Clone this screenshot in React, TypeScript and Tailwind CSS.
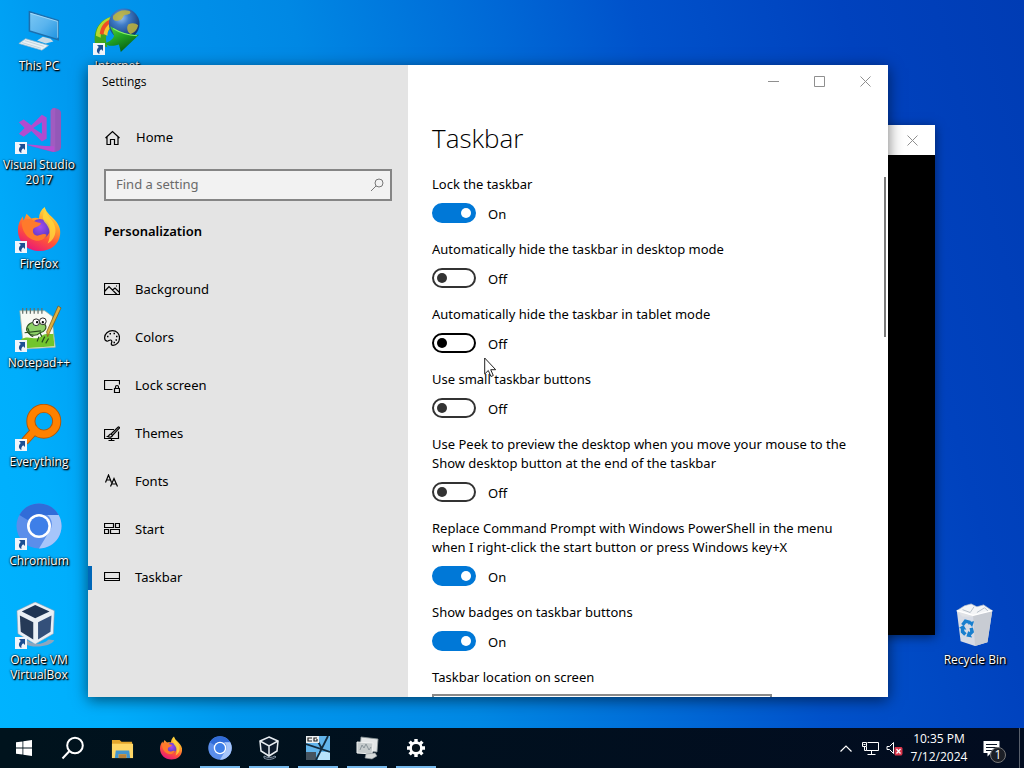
import { useId, useState, type ReactNode } from "react";

type IconProps = { className?: string };

function ThisPcIcon({ className }: IconProps) {
  return (
    <svg viewBox="0 0 48 48" className={className} aria-hidden="true">
      <defs>
        <linearGradient id="pc-screen" x1="0" y1="0" x2="1" y2="1">
          <stop offset="0" stopColor="#7cc8f4" />
          <stop offset="0.5" stopColor="#5ab4ee" />
          <stop offset="1" stopColor="#1d92e0" />
        </linearGradient>
      </defs>
      <path d="M14 4 44 13v20L14 24z" fill="url(#pc-screen)" stroke="#1c6fae" strokeWidth="1.6" />
      <path d="M15 5.5 43.5 14v17" fill="none" stroke="#b7e4fb" strokeWidth="0.8" />
      <path d="m28 30 8 2 3 3-8 2-9-3z" fill="#c9dbe6" />
      <path d="m10 32 24 7-7 5L3 37z" fill="#e8f1f5" stroke="#9fb8c8" strokeWidth="0.7" />
      <path d="m9 34 20 6M6 36l20 6" stroke="#b9ccd8" strokeWidth="0.8" />
    </svg>
  );
}

function GlobeArrowIcon({ className }: IconProps) {
  return (
    <svg viewBox="0 0 48 48" className={className} aria-hidden="true">
      <defs>
        <radialGradient id="globe" cx="0.4" cy="0.3" r="0.7">
          <stop offset="0" stopColor="#9cc4f0" />
          <stop offset="0.35" stopColor="#3f7cc8" />
          <stop offset="1" stopColor="#12356e" />
        </radialGradient>
        <linearGradient id="globe-arrow" x1="0" y1="0" x2="0.6" y2="1">
          <stop offset="0" stopColor="#58dc3c" />
          <stop offset="0.5" stopColor="#21a325" />
          <stop offset="1" stopColor="#075c12" />
        </linearGradient>
      </defs>
      <path d="M18 9C5 13-1 23 1 37l13 4c-3-9-2-18 8-23z" fill="#3fa51f" />
      <path d="M18 9C8 12 2 20 2 29l5 2c0-9 4-14 12-17z" fill="#b6d82e" />
      <path d="M19 11C11 14 7 19 6 27l4 1c1-7 4-10 10-13z" fill="#ef4b26" />
      <path d="M20 14c-6 3-9 7-10 13l4 2c0-6 3-9 8-12z" fill="#f7c531" />
      <circle cx="31.500" cy="16.500" r="16" fill="url(#globe)" />
      <path d="M20 8c4-5 11-7 17-5 3 2-1 4-4 4s-2 5-7 6-7-1-6-5zM36 17c4-2 8-1 10 1-1 5-4 8-8 9-4-2-4-8-2-10z" fill="#c3b53a" opacity="0.85" />
      <path d="M17 19c9 6 17 9 30 9L28 46l-2-8c-6 2-11 2-15-1 5-2 9-4 10-8z" fill="url(#globe-arrow)" />
      <path d="M20 21.500c8 5 15 7 25 7.500" fill="none" stroke="#86f066" strokeWidth="1.200" />
    </svg>
  );
}

function VisualStudioIcon({ className }: IconProps) {
  return (
    <svg viewBox="0 0 48 48" className={className} aria-hidden="true">
      <path d="M38 1c5 0 9 2 9 5v36c0 3-4 5-9 5L12 40l24 1z" fill="#9358b8" />
      <path d="M36 4c1-2 3-3 5-3v46l-5-6z" fill="#a05cc0" />
      <path d="M3 16 8 13l8 6L27 8l5 3v22l-5 3-11-11-8 6-5-3 6-6zm15 6 9 6V16z" fill="#b14ccf" fillRule="evenodd" />
      <path d="M10 39c9 0 18 2 30 2v6z" fill="#b64dd2" />
    </svg>
  );
}

function FirefoxIcon({ className }: IconProps) {
  const id = useId();
  return (
    <svg viewBox="0 0 48 48" className={className} aria-hidden="true">
      <defs>
        <linearGradient id={`${id}b`} x1="0.8" y1="0" x2="0.3" y2="1">
          <stop offset="0" stopColor="#ffee46" />
          <stop offset="0.35" stopColor="#ffa02c" />
          <stop offset="0.65" stopColor="#ff5438" />
          <stop offset="1" stopColor="#e8147c" />
        </linearGradient>
        <radialGradient id={`${id}p`} cx="0.5" cy="0.4" r="0.6">
          <stop offset="0" stopColor="#a34df0" />
          <stop offset="1" stopColor="#5a38c0" />
        </radialGradient>
      </defs>
      <path d="M30 1c1 5 5 8 9 12 5 5 8 10 7 17C45 40 36 47 25 47 12 47 2 38 2 25c0-6 2-10 5-14l1 4 3-7 5 5c3-1 6-1 8 0 0-5 2-9 6-12z" fill={`url(#${id}b)`} />
      <circle cx="25" cy="24" r="10.5" fill={`url(#${id}p)`} />
      <path d="M6 17c5-4 9-4 12-2 2 2 6 2 8 3-1 4-6 3-8 6-1 3 0 6 4 7 4 0 6-3 10-1-2 5-7 7-12 6C11 34 6 26 6 17z" fill="#ff7a2b" />
      <path d="M31 3c0 8 9 11 10 20 1 7-2 13-8 16 4-8 3-16-3-22-3-4-2-10 1-14z" fill="#ffd83c" opacity="0.8" />
    </svg>
  );
}

function NotepadIcon({ className }: IconProps) {
  return (
    <svg viewBox="0 0 48 48" className={className} aria-hidden="true">
      <path d="M4 6h26l8 6v6l3 26L8 46z" fill="#f8faf4" stroke="#a4b3a0" strokeWidth="0.8" />
      <path d="M5 36c9-6 15 3 22-4 4-3 9-1 12-2l1 13-31 2z" fill="#72c52d" />
      <path d="M7 3v6m4-6v6m4-6v6m4-6v6m4-6v6m4-6v6" stroke="#65716c" strokeWidth="1.3" />
      <path d="M11 26c0-6 6-9 11-8l8 2c3 4 0 8-5 9-4 4-11 3-13-1z" fill="#8ed169" stroke="#2e5422" strokeWidth="1.2" />
      <circle cx="21" cy="18" r="3.5" fill="#fff" stroke="#222" />
      <circle cx="28" cy="17" r="3.5" fill="#fff" stroke="#222" />
      <circle cx="22" cy="18" r="1.2" />
      <circle cx="28" cy="18" r="1.2" />
      <path d="m9 29 17-2M12 24c3 3 0 8 6 9m7-4 2 4M22 38l2-5m3 6 3-6m1 7 3-5" fill="none" stroke="#264c1e" strokeWidth="1.2" />
      <path d="M47 3 35 29l-2 4-1-5L44 1z" fill="#deb03f" stroke="#7e5b1b" strokeWidth="0.8" />
    </svg>
  );
}

function EverythingIcon({ className }: IconProps) {
  return (
    <svg viewBox="0 0 48 48" className={className} aria-hidden="true">
      <circle cx="29" cy="18" r="13.5" fill="none" stroke="#b05708" strokeWidth="9.5" />
      <path d="m19 28-9 10" stroke="#b05708" strokeWidth="9" strokeLinecap="round" />
      <circle cx="29" cy="18" r="13.5" fill="none" stroke="#ff8100" strokeWidth="7.5" />
      <path d="m20 27-10 11" stroke="#ff8100" strokeWidth="7" strokeLinecap="round" />
    </svg>
  );
}

function ChromiumIcon({ className }: IconProps) {
  return (
    <svg viewBox="0 0 48 48" className={className} aria-hidden="true">
      <circle cx="24" cy="24" r="23.5" fill="#5b8eea" />
      <path d="M3.5 12.5A23.5 23.5 0 0 1 44.5 12.5H24a12 12 0 0 0-10.5 6z" fill="#316cd8" />
      <path d="M44.5 12.5A23.5 23.5 0 0 1 24 47.5L34.5 30a12 12 0 0 0-2-17.5z" fill="#a6c5fa" />
      <circle cx="24" cy="24" r="12.5" fill="#fff" />
      <circle cx="24" cy="24" r="9.8" fill="#3e7fe8" />
    </svg>
  );
}

function VirtualBoxIcon({ className }: IconProps) {
  return (
    <svg viewBox="0 0 48 48" className={className} aria-hidden="true">
      <path d="M12 40c5 5 16 5 22-1l6 1c-4 7-24 9-32 3z" fill="#8fa6bd" />
      <path d="M20 0 40 9l-1 24-19 11L2 33 1 9z" fill="#e9eff5" stroke="#8b9db2" strokeWidth="0.6" />
      <path d="m20 3 15 7-15 7-14-7z" fill="#1e3453" />
      <path d="m4 14 14 7v18L5 31z" fill="#263a57" />
      <path d="m37 14-14 7v18l13-8z" fill="#34507a" />
    </svg>
  );
}

function RecycleBinIcon({ className }: IconProps) {
  return (
    <svg viewBox="0 0 48 48" className={className} aria-hidden="true">
      <path d="m5 9 8-5 7-2 6 3 7-2 9 6-5 6H11z" fill="#f4f5f7" stroke="#bac1ca" strokeWidth="0.7" />
      <path d="m11 8 8 3 4-6m3 6 8-5 4 4" fill="none" stroke="#b4bdc7" />
      <path d="m5 9 17 5 20-5-5 33-13 4-15-5z" fill="#e0e2e6" opacity="0.96" />
      <path d="m22 14 20-5-5 33-13 4z" fill="#c8ccd3" />
      <path d="m5 9 17 5 20-5" fill="none" stroke="#fff" strokeWidth="1.3" />
      <g fill="none" stroke="#187fce" strokeWidth="3.6">
        <path d="m11 24 3-4 4 1 1 2" />
        <path d="m11 27 0 4 3 3" />
        <path d="m18 34 3-3-1-4" />
      </g>
      <path d="m17 21 6-1-2 6zM7 27l5-3 3 5zM17 30l-2 6 6 1z" fill="#187fce" />
    </svg>
  );
}

function FolderIcon({ className }: IconProps) {
  return (
    <svg viewBox="0 0 24 24" className={className} aria-hidden="true">
      <path d="M1 3h8l2 2h11v17H1z" fill="#e4a72d" />
      <path d="M1 7h22v15H1z" fill="#ffd766" />
      <path d="M5 14h14l1 8h-4v-4H8v4H4z" fill="#4295cf" />
      <path d="M8 18h8v4H8z" fill="#b8823a" />
    </svg>
  );
}

function TilesIcon({ className }: IconProps) {
  return (
    <svg viewBox="0 0 24 24" className={className} aria-hidden="true">
      <path d="M0 0h24v24H0z" fill="#62b5ec" />
      <path d="M0 16h10v8H0z" fill="#46535f" />
      <path d="M12 16h12v8H12z" fill="#b8e3fc" />
      <path d="M22 0 10 24M0 8l24 8M9 0l7 13" fill="none" stroke="#122b3e" strokeWidth="1.8" />
      <path d="M0 0h13v7H0z" fill="#edf1f2" />
      <path d="M6 2H2v3h4M11 2H8v3h3V3" fill="none" stroke="#222" strokeWidth="1.2" />
    </svg>
  );
}

function MonitorsIcon({ className }: IconProps) {
  return (
    <svg viewBox="0 0 24 24" className={className} aria-hidden="true">
      <path d="m6 1 17 2-1 13-17-2z" fill="#e3e6e7" stroke="#8c9598" strokeWidth="0.8" />
      <path d="m2 6 16 1-1 11-15-1z" fill="#c6cccd" stroke="#eff1f1" strokeWidth="1" />
      <path d="m5 14 2-5 2 3 2-4 3 6 2-3" fill="none" stroke="#89949a" strokeWidth="1" />
      <path d="m11 18 9-1 2 3-5 3-7-1z" fill="#d6dada" stroke="#889195" strokeWidth="0.6" />
    </svg>
  );
}

function GearIcon({ className }: IconProps) {
  return (
    <svg viewBox="0 0 24 24" className={className} aria-hidden="true">
      <path
        d="M12 3v4M12 17v4M3 12h4M17 12h4M5.6 5.6l3 3M15.4 15.4l3 3M18.4 5.6l-3 3M8.6 15.4l-3 3"
        stroke="#fff"
        strokeWidth="3.4"
      />
      <circle cx="12" cy="12" r="5.4" fill="#06121b" stroke="#fff" strokeWidth="2.6" />
    </svg>
  );
}

function ShortcutBadge() {
  return (
    <svg viewBox="0 0 12 12" className="absolute bottom-0 left-0 size-3" aria-hidden="true">
      <path d="M0 0h12v12H0z" fill="#f1f5fb" />
      <path d="M4 2h6v6L8.200 6.200C6.500 7.500 6 9 6.500 11 3.500 9.500 3 6.500 5.800 3.900z" fill="#1d4f93" />
    </svg>
  );
}

type DesktopItem = { label: string; icon: ReactNode; shortcut: boolean };

const desktopItems: DesktopItem[] = [
  { label: "This PC", icon: <ThisPcIcon className="size-full" />, shortcut: false },
  { label: "Visual Studio 2017", icon: <VisualStudioIcon className="size-full" />, shortcut: true },
  { label: "Firefox", icon: <FirefoxIcon className="size-full" />, shortcut: true },
  { label: "Notepad++", icon: <NotepadIcon className="size-full" />, shortcut: true },
  { label: "Everything", icon: <EverythingIcon className="size-full" />, shortcut: true },
  { label: "Chromium", icon: <ChromiumIcon className="size-full" />, shortcut: true },
  { label: "Oracle VM VirtualBox", icon: <VirtualBoxIcon className="size-full" />, shortcut: true },
];

function DesktopShortcut({ label, icon, shortcut }: DesktopItem) {
  return (
    <button type="button" className="flex h-[99px] w-[78px] flex-col items-center gap-[3px] pt-[7px]">
      <span className="relative flex size-12 items-center justify-center">
        <span className="size-[46px]">{icon}</span>
        {shortcut && <ShortcutBadge />}
      </span>
      <span className="text-center text-xs leading-[15px] text-white [text-shadow:1px_1px_2px_#000,0_0_2px_#000,1px_1px_1px_#000]">
        {label}
      </span>
    </button>
  );
}

function NavSvg({ children }: { children: ReactNode }) {
  return (
    <svg
      viewBox="0 0 16 16"
      className="size-4 shrink-0"
      fill="none"
      stroke="#000"
      strokeWidth="1.200"
      aria-hidden="true"
    >
      {children}
    </svg>
  );
}

const navItems: { label: string; icon: ReactNode }[] = [
  {
    label: "Background",
    icon: (
      <NavSvg>
        <path d="M.5 1.500h15v11H.5zM.5 9.500l4.500-5 8 8M8.500 8l2.500-2 4.500 4.500" />
        <path d="M12 4h1" />
      </NavSvg>
    ),
  },
  {
    label: "Colors",
    icon: (
      <NavSvg>
        <path d="M8.500.7c4 0 7 3 7 7 0 4.500-3 7.600-6.500 7.600-1.500 0-2-1-1.500-2.300.6-1.500.4-2.700-.8-3-1.500-.3-2.200 1.500-3.700 1.200C1.500 10.900.6 9.500.6 7.700c0-4 3.500-7 7.900-7z" />
        <path d="M3 6.500h1.500M5.500 3.700H7M9.500 3.500H11M12 6.500h1.500M11.500 10H13M9.500 12.500H11" strokeWidth="1.500" />
      </NavSvg>
    ),
  },
  {
    label: "Lock screen",
    icon: (
      <NavSvg>
        <path d="M8.500 11.500h-8v-9h15v4M10.500 10.500h5v4h-5zM11.500 10.500V9a1.500 1.500 0 0 1 3 0v1.500" />
      </NavSvg>
    ),
  },
  {
    label: "Themes",
    icon: (
      <NavSvg>
        <path d="M10 3.500H.5v9h14v-7M7.500 12.500v2M4.500 14.500h6" />
        <path d="M14 1.200c.8-.6 1.800.2 1.300 1L8.500 9.500 7 8zM7 8c-2 0-1.500 2-3.500 2.500 2 1 4.500.8 5-1" />
      </NavSvg>
    ),
  },
  {
    label: "Fonts",
    icon: (
      <NavSvg>
        <path d="M1.500 8.500 4.500 1l3 7.500M2.500 6h4M6.500 12.500l3.500-8 3.500 8M7.800 10h4.400" />
      </NavSvg>
    ),
  },
  {
    label: "Start",
    icon: (
      <NavSvg>
        <path d="M.5 1.500h9v4h-9zM11.500 1.500h4v4h-4zM.5 7.500h4v4h-4zM6.500 7.500h9v4h-9z" />
      </NavSvg>
    ),
  },
  {
    label: "Taskbar",
    icon: (
      <NavSvg>
        <path d="M.5 2.500h15v8H.5zM.5 8.500h15" />
      </NavSvg>
    ),
  },
];

function Toggle({ id, label, initial, hot }: { id: string; label: string; initial: boolean; hot?: boolean }) {
  const [on, setOn] = useState(initial);
  return (
    <div className="flex flex-col gap-[9px]">
      <label htmlFor={id} className="leading-[19px]">
        {label}
      </label>
      <div className="flex h-5 items-center gap-3">
        <input
          id={id}
          type="checkbox"
          role="switch"
          checked={on}
          onChange={(e) => setOn(e.target.checked)}
          className={`flex h-5 w-11 shrink-0 appearance-none items-center rounded-full border-2 px-[3px] before:size-[10px] before:rounded-full checked:justify-end checked:border-[#0078d7] checked:bg-[#0078d7] checked:before:bg-white ${
            hot ? "border-black before:bg-black" : "border-[#333] before:bg-[#333]"
          }`}
        />
        <span className="pt-[2px] leading-[18px]">{on ? "On" : "Off"}</span>
      </div>
    </div>
  );
}

const settings = [
  { id: "lock", label: "Lock the taskbar", initial: true },
  { id: "hide-desktop", label: "Automatically hide the taskbar in desktop mode", initial: false },
  { id: "hide-tablet", label: "Automatically hide the taskbar in tablet mode", initial: false, hot: true },
  { id: "small", label: "Use small taskbar buttons", initial: false },
  {
    id: "peek",
    label: "Use Peek to preview the desktop when you move your mouse to the Show desktop button at the end of the taskbar",
    initial: false,
  },
  {
    id: "powershell",
    label: "Replace Command Prompt with Windows PowerShell in the menu when I right-click the start button or press Windows key+X",
    initial: true,
  },
  { id: "badges", label: "Show badges on taskbar buttons", initial: true },
];

function CaptionButton({ name, path }: { name: string; path: string }) {
  return (
    <button type="button" aria-label={name} className="flex h-full w-[46px] items-center justify-center">
      <svg viewBox="0 0 11 11" className="size-[11px]" fill="none" stroke="#8f8f8f" aria-hidden="true">
        <path d={path} />
      </svg>
    </button>
  );
}

function SettingsWindow() {
  return (
    <section
      aria-label="Settings"
      className="absolute top-[65px] right-[136px] bottom-[31px] left-[88px] flex overflow-hidden bg-white font-['Noto_Sans',sans-serif] text-[13px] text-black shadow-[0_3px_14px_rgba(0,0,0,0.55)]"
    >
      <aside className="flex w-80 shrink-0 flex-col bg-[#e4e4e4]">
        <div className="flex h-8 items-center px-[14px] pt-[2px] font-['Open_Sans',sans-serif] text-xs leading-4">Settings</div>
        <nav className="flex flex-col">
          <a href="#home" className="mt-[17px] flex h-12 items-center gap-4 px-4">
            <NavSvg>
              <path d="M1.500 8 8.500 1.500l7 6.500M3 7v7.500h3.500v-5h4v5H14V7" />
            </NavSvg>
            Home
          </a>
          <div className="mx-4 mt-[7px] flex h-8 items-center border-2 border-[#858585] bg-[#f2f2f2]">
            <input
              type="search"
              aria-label="Find a setting"
              placeholder="Find a setting"
              className="min-w-0 flex-1 bg-transparent pl-[10px] outline-none placeholder:text-[#6a6a6a]"
            />
            <svg viewBox="0 0 14 14" className="mr-[6px] size-[14px]" fill="none" stroke="#777" aria-hidden="true">
              <circle cx="9" cy="5" r="4" />
              <path d="M6 8 1 13" />
            </svg>
          </div>
          <h2 className="mt-5 mb-[25px] px-4 leading-5 font-semibold">Personalization</h2>
          {navItems.map((item) => {
            const active = item.label === "Taskbar";
            return (
              <a
                key={item.label}
                href={`#${item.label}`}
                aria-current={active ? "page" : undefined}
                className="flex h-12 items-center"
              >
                <span className={`h-6 w-1 ${active ? "bg-[#0067b8]" : ""}`} />
                <span className="flex items-center gap-[15px] pl-3">
                  {item.icon}
                  {item.label}
                </span>
              </a>
            );
          })}
        </nav>
      </aside>
      <main className="relative flex min-w-0 flex-1 flex-col">
        <div className="flex h-8 shrink-0 justify-end">
          <CaptionButton name="Minimize" path="M0 5.500h11" />
          <CaptionButton name="Maximize" path="M.5.5h10v10H.5z" />
          <CaptionButton name="Close" path="m.5.5 10 10m0-10-10 10" />
        </div>
        <div className="flex min-h-0 flex-1 flex-col gap-[17px] overflow-hidden pr-5 pl-6">
          <h1 className="mt-[23px] mb-[2px] font-['Open_Sans',sans-serif] text-[26px] leading-9 font-light">Taskbar</h1>
          {settings.map((s) => (
            <Toggle key={s.id} {...s} />
          ))}
          <div className="flex flex-col gap-2">
            <label htmlFor="location" className="leading-[18px]">
              Taskbar location on screen
            </label>
            <select
              id="location"
              className="h-8 w-[340px] shrink-0 appearance-none border-2 border-[#8a8a8a] bg-white px-2"
            >
              <option>Bottom</option>
            </select>
          </div>
        </div>
        <div className="absolute top-28 right-[2px] h-40 w-[2px] bg-[#7a7a7a]" />
      </main>
      <svg
        viewBox="0 0 13 21"
        className="absolute top-[292px] left-[396px] h-[21px] w-[13px]"
        fill="#fff"
        stroke="#222"
        aria-hidden="true"
      >
        <path d="M.7 1v16l3.600-3.500 2.700 6 2.300-1-2.600-5.800h5z" />
      </svg>
    </section>
  );
}

const pinned: { name: string; icon: ReactNode; open: boolean }[] = [
  {
    name: "Start",
    open: false,
    icon: (
      <svg viewBox="0 0 16 16" className="size-4" fill="#fff" aria-hidden="true">
        <path d="m0 2.300 6.500-.9v6.200H0zM7.300 1.300 16 0v7.600H7.300zM0 8.400h6.500v6.200L0 13.700zM7.300 8.400H16V16l-8.700-1.300z" />
      </svg>
    ),
  },
  {
    name: "Search",
    open: false,
    icon: (
      <svg viewBox="0 0 24 24" className="size-6" fill="none" stroke="#fff" strokeWidth="2" aria-hidden="true">
        <circle cx="14" cy="9.500" r="7.800" />
        <path d="M8.500 15 1.500 22.500" />
      </svg>
    ),
  },
  { name: "File Explorer", open: false, icon: <FolderIcon className="size-[23px]" /> },
  { name: "Firefox", open: false, icon: <FirefoxIcon className="size-6" /> },
  { name: "Chromium", open: true, icon: <ChromiumIcon className="size-6" /> },
  {
    name: "VirtualBox",
    open: true,
    icon: (
      <svg viewBox="0 0 24 24" className="size-6" fill="#0d1b2c" stroke="#e8edf2" aria-hidden="true">
        <path d="M7 20c3 2 8 2 11 0l1 1c-4 3-9 3-12 1z" stroke="#8494a5" />
        <path d="m12 1 9 4-1 10-8 5-8-5L3 5z" strokeWidth="1.500" />
        <path d="m3 5 9 5 9-5M12 10v10" strokeWidth="1.500" />
      </svg>
    ),
  },
  { name: "Console", open: true, icon: <TilesIcon className="size-6" /> },
  { name: "Monitor", open: true, icon: <MonitorsIcon className="size-6" /> },
  { name: "Settings", open: true, icon: <GearIcon className="size-6" /> },
];

function Taskbar() {
  return (
    <footer className="flex h-10 shrink-0 items-stretch justify-between bg-linear-to-r from-[#00131d] to-[#020c20] text-xs text-white">
      <div className="flex gap-px">
        {pinned.map((p) => (
          <button key={p.name} type="button" aria-label={p.name} className="flex w-12 justify-center">
            <span
              className={`flex h-10 w-10 items-center justify-center border-b-2 pt-[2px] ${
                p.open ? "border-[#76b9ed]" : "border-transparent"
              }`}
            >
              {p.icon}
            </span>
          </button>
        ))}
      </div>
      <div className="flex items-center">
        <button type="button" aria-label="Show hidden icons" className="flex h-full w-6 items-center justify-center">
          <svg viewBox="0 0 12 7" className="h-[7px] w-3" fill="none" stroke="#fff" strokeWidth="1.200" aria-hidden="true">
            <path d="m.5 6.500 5.500-5.500 5.500 5.500" />
          </svg>
        </button>
        <button type="button" aria-label="Network" className="flex h-full w-6 items-center justify-center">
          <svg viewBox="0 0 17 14" className="h-[14px] w-[17px]" fill="none" stroke="#fff" aria-hidden="true">
            <path d="M5.500 1.500h11v8h-12V6M9.500 9.500v3.500M5.500 13.500h8M.5 1.500h4v4h-4zM2.500 5.500v4h2M1.500 3.500h2" />
          </svg>
        </button>
        <button type="button" aria-label="Volume muted" className="flex h-full w-6 items-center justify-center">
          <svg viewBox="0 0 17 15" className="h-[15px] w-[17px]" fill="none" aria-hidden="true">
            <path d="M1 5.500h2.500l4-4v11l-4-4H1z" stroke="#fff" />
            <path d="M9 6h6.500L16.500 7v6l-1 1.500H9L8.500 13V7z" fill="#d8354a" />
            <path d="m10.500 8 4 4.500m0-4.500-4 4.500" stroke="#fff" strokeWidth="1.200" />
          </svg>
        </button>
        <div className="w-[66px] text-center leading-[18px]">
          <div>10:35 PM</div>
          <div>7/12/2024</div>
        </div>
        <button type="button" aria-label="Notifications" className="flex h-full w-[47px] items-center pl-[11px]">
          <span className="relative">
            <svg viewBox="0 0 17 17" className="size-[17px]" aria-hidden="true">
              <path d="M.5 1h16v12H8l-3.500 3.500V13h-4z" fill="#fff" />
              <path d="M3 4.500h11M3 7.500h11M3 10.500h7" stroke="#0b1525" />
            </svg>
            <span className="absolute top-[7px] left-[7px] flex size-4 items-center justify-center rounded-full border border-[#777] bg-[#1c1f26] leading-none">
              1
            </span>
          </span>
        </button>
        <button type="button" aria-label="Show desktop" className="h-full w-[5px] border-l border-[#59606c]" />
      </div>
    </footer>
  );
}

export default function App() {
  return (
    <div className="flex h-screen flex-col overflow-hidden bg-[linear-gradient(75deg,#00b4ff_0%,#00aefc_10%,#009af0_20%,#0088e4_40%,#0068d6_57%,#0052cb_68%,#0042be_85%,#003cb4_100%)] font-['Open_Sans','Noto_Sans',sans-serif]">
      <div className="relative min-h-0 flex-1">
        <div className="flex">
          <div className="flex flex-col">
            {desktopItems.map((item) => (
              <DesktopShortcut key={item.label} {...item} />
            ))}
          </div>
          <DesktopShortcut label="Internet" icon={<GlobeArrowIcon className="size-full" />} shortcut />
        </div>
        <div className="absolute right-[10px] bottom-[35px] flex">
          <DesktopShortcut label="Recycle Bin" icon={<RecycleBinIcon className="size-full" />} shortcut={false} />
        </div>
        <section
          aria-label="Console"
          className="absolute top-[125px] right-[89px] bottom-[93px] left-[130px] flex flex-col bg-black shadow-[0_2px_10px_rgba(0,0,0,0.5)]"
        >
          <div className="flex h-[30px] justify-end bg-white">
            <CaptionButton name="Close console" path="m.5.5 10 10m0-10-10 10" />
          </div>
        </section>
        <SettingsWindow />
      </div>
      <Taskbar />
    </div>
  );
}
